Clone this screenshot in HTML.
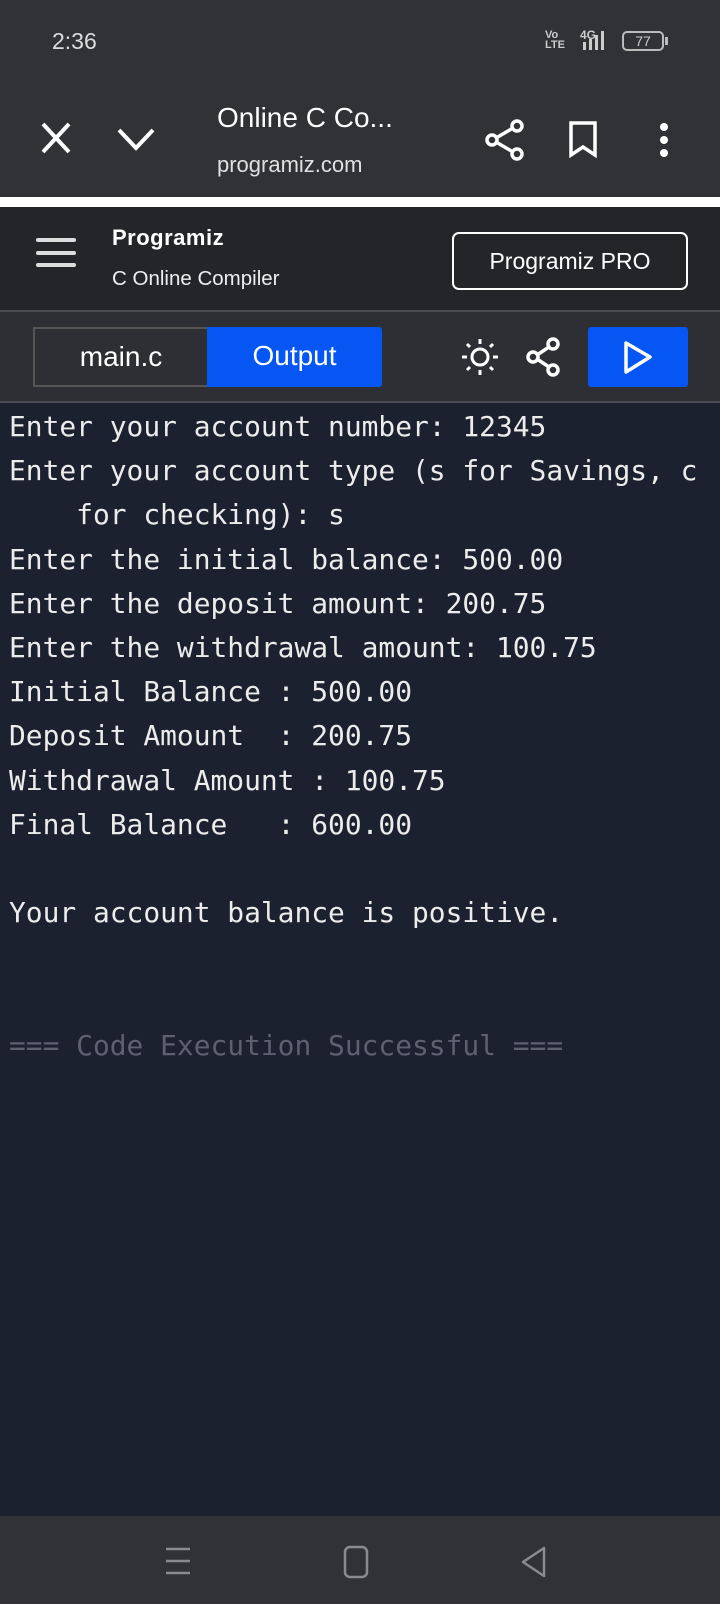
<!DOCTYPE html>
<html><head><meta charset="utf-8"><style>
*{margin:0;padding:0;box-sizing:border-box}
body{width:720px;height:1604px;background:#1c2130;position:relative;overflow:hidden;font-family:"Liberation Sans",sans-serif;color:#fff}
.a{position:absolute}
#top{left:0;top:0;width:720px;height:197px;background:#313236}
#white{left:0;top:197px;width:720px;height:10px;background:#fff}
#hdr{left:0;top:207px;width:720px;height:103px;background:#232529}
#tb{left:0;top:310px;width:720px;height:93px;background:#2d2f34;border-top:2px solid #4a4c52;border-bottom:2px solid #4a4c52}
pre{position:absolute;left:9px;top:405px;font-family:"DejaVu Sans Mono","Liberation Mono",monospace;font-size:27.9px;line-height:44.2px;color:#ececec}
#nav{left:0;top:1516px;width:720px;height:88px;background:#313236}
</style></head><body>
<div class="a" id="top"></div>
<div class="a" style="left:52px;top:28px;font-size:23px;color:#ddd">2:36</div>
<div class="a" style="left:545px;top:30px;font-size:11px;line-height:10px;color:#ccc;font-weight:bold">Vo<br>LTE</div>
<div class="a" style="left:580px;top:28px;font-size:12px;color:#ccc;font-weight:bold">4G</div>
<svg class="a" style="left:582px;top:30px" width="30" height="22"><rect x="1" y="12" width="3" height="8" fill="#ccc"/><rect x="7" y="9" width="3" height="11" fill="#ccc"/><rect x="13" y="5" width="3" height="15" fill="#ccc"/><rect x="19" y="1" width="3" height="19" fill="#ccc"/></svg>
<div class="a" style="left:622px;top:31px;width:42px;height:20px;border:2px solid #bbb;border-radius:5px;font-size:14px;color:#ccc;text-align:center;line-height:16px">77</div>
<div class="a" style="left:665px;top:37px;width:3px;height:8px;background:#bbb"></div>
<svg class="a" style="left:38px;top:120px" width="40" height="36" stroke="#fff" stroke-width="4" fill="none"><path d="M5 4L31 32M31 4L5 32"/></svg>
<svg class="a" style="left:116px;top:126px" width="42" height="26" stroke="#fff" stroke-width="4" fill="none"><path d="M3 4L20 22L37 4"/></svg>
<div class="a" style="left:217px;top:102px;font-size:28px">Online C Co...</div>
<div class="a" style="left:217px;top:152px;font-size:22px;color:#e0e0e0">programiz.com</div>
<svg class="a" style="left:484px;top:118px" width="42" height="44" stroke="#fff" stroke-width="3.5" fill="none"><circle cx="33" cy="8" r="5"/><circle cx="8" cy="22" r="5"/><circle cx="33" cy="36" r="5"/><path d="M12 20L29 10M12 24L29 34"/></svg>
<svg class="a" style="left:568px;top:120px" width="32" height="40" stroke="#fff" stroke-width="3.5" fill="none"><path d="M3 3H27V35L15 27L3 35Z"/></svg>
<svg class="a" style="left:656px;top:122px" width="16" height="36" fill="#fff"><circle cx="8" cy="5" r="4"/><circle cx="8" cy="18" r="4"/><circle cx="8" cy="31" r="4"/></svg>
<div class="a" id="white"></div>
<div class="a" id="hdr"></div>
<div class="a" style="left:36px;top:238px;width:40px;height:4px;background:#ddd;border-radius:2px"></div>
<div class="a" style="left:36px;top:251px;width:40px;height:4px;background:#ddd;border-radius:2px"></div>
<div class="a" style="left:36px;top:263px;width:40px;height:4px;background:#ddd;border-radius:2px"></div>
<div class="a" style="left:112px;top:225px;font-size:22px;font-weight:bold;letter-spacing:0.5px">Programiz</div>
<div class="a" style="left:112px;top:267px;font-size:20.5px;color:#eee">C Online Compiler</div>
<div class="a" style="left:452px;top:232px;width:236px;height:58px;border:2px solid #fff;border-radius:7px;font-size:23px;text-align:center;line-height:54px">Programiz PRO</div>
<div class="a" id="tb"></div>
<div class="a" style="left:33px;top:327px;width:174px;height:60px;border:2px solid #555;border-right:none;font-size:28px;text-align:center;line-height:56px">main.c</div>
<div class="a" style="left:207px;top:327px;width:175px;height:60px;background:#0556f3;border-radius:0 3px 3px 0;font-size:28px;text-align:center;line-height:58px">Output</div>
<svg class="a" style="left:458px;top:335px" width="44" height="44" stroke="#fff" stroke-width="3" fill="none"><circle cx="22" cy="22" r="8"/><path d="M22 4V9M22 35V40M4 22H9M35 22H40M9 9L12 12M32 32L35 35M9 35L12 32M32 12L35 9"/></svg>
<svg class="a" style="left:524px;top:336px" width="40" height="42" stroke="#fff" stroke-width="3.5" fill="none"><circle cx="29" cy="8" r="5"/><circle cx="9" cy="21" r="5"/><circle cx="29" cy="34" r="5"/><path d="M13 19L25 11M13 23L25 31"/></svg>
<div class="a" style="left:588px;top:327px;width:100px;height:60px;background:#0556f3;border-radius:3px"></div>
<svg class="a" style="left:622px;top:340px" width="32" height="36" stroke="#fff" stroke-width="3.5" fill="none" stroke-linejoin="round"><path d="M4 3L28 17L4 32Z"/></svg>
<pre>Enter your account number: 12345
Enter your account type (s for Savings, c
    for checking): s
Enter the initial balance: 500.00
Enter the deposit amount: 200.75
Enter the withdrawal amount: 100.75
Initial Balance : 500.00
Deposit Amount  : 200.75
Withdrawal Amount : 100.75
Final Balance   : 600.00

Your account balance is positive.


<span style="color:#5c6070">=== Code Execution Successful ===</span></pre>
<div class="a" id="nav"></div>
<svg class="a" style="left:164px;top:1546px" width="28" height="30" stroke="#8a8b8f" stroke-width="2.5"><path d="M2 3H26M2 15H26M2 27H26"/></svg>
<svg class="a" style="left:343px;top:1545px" width="26" height="34" stroke="#8a8b8f" stroke-width="2.5" fill="none"><rect x="2" y="2" width="22" height="30" rx="5"/></svg>
<svg class="a" style="left:520px;top:1545px" width="28" height="34" stroke="#8a8b8f" stroke-width="2.5" fill="none" stroke-linejoin="round"><path d="M24 3V31L3 17Z"/></svg>
</body></html>
